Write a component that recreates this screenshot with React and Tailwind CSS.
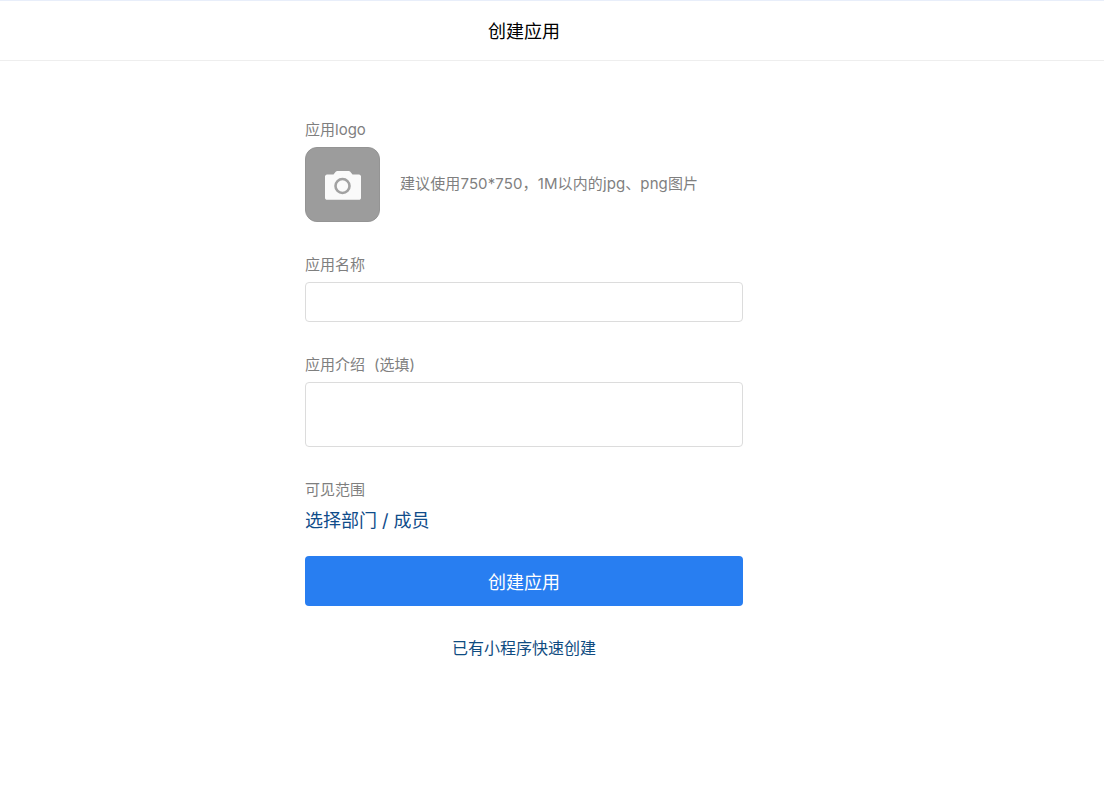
const fontStack = { fontFamily: 'Inter, "Noto Sans CJK SC", sans-serif' };

function CameraIcon() {
  return (
    <svg width="36" height="30" viewBox="0 0 36 30">
      <path
        d="M2 4.5h6.5l2.2-2.7c.4-.5 1-.8 1.7-.8h11.2c.7 0 1.3.3 1.700.8l2.2 2.7H34c1 0 2 1 2 2V28c0 1-1 1.800-2 1.800H2c-1 0-2-.8-2-1.800V6.500c0-1 1-2 2-2z"
        fill="#fafafa"
      />
      <circle cx="17.5" cy="16" r="7" fill="none" stroke="#a2a2a2" strokeWidth="2.6" />
    </svg>
  );
}

export default function App() {
  return (
    <div className="min-h-screen bg-white" style={fontStack}>
      <header className="h-[61px] border-t border-t-[#e8eefa] border-b border-b-[#eeeeee]">
        <div className="w-[1048px] h-full flex items-center justify-center">
          <h1 className="pt-[2px] text-[18px] leading-[24px] text-black font-normal">创建应用</h1>
        </div>
      </header>

      <div className="w-[1048px]">
        <div className="w-[438px] mx-auto pt-[58px]">
          <div className="text-[15px] leading-[22px] text-[#7f7f7f]">应用logo</div>
          <div className="flex items-center mt-[6px]">
            <div className="w-[75px] h-[75px] rounded-[12px] bg-[#9c9c9c] border border-[#949494] flex items-center justify-center">
              <CameraIcon />
            </div>
            <span className="ml-5 mb-[2px] text-[15px] leading-[20px] tracking-[0.11px] text-[#7f7f7f]">
              建议使用750*750，1M以内的jpg、png图片
            </span>
          </div>

          <div className="text-[15px] leading-[22px] text-[#7f7f7f] mt-[32px]">应用名称</div>
          <input
            type="text"
            className="block w-full h-[40px] mt-[6px] rounded border border-[#dcdcdc] outline-none"
          />

          <div className="text-[15px] leading-[22px] text-[#7f7f7f] mt-[32px]">
            应用介绍<span className="ml-[9px]">(选填)</span>
          </div>
          <textarea className="block w-full h-[65px] mt-[6px] rounded border border-[#dcdcdc] outline-none resize-none" />

          <div className="text-[15px] leading-[22px] text-[#7f7f7f] mt-[32px]">可见范围</div>
          <a className="block text-[18px] leading-[26px] text-[#0f4c8a] mt-[7px] cursor-pointer">
            选择部门 / 成员
          </a>

          <button className="block w-full h-[50px] pt-[2px] mt-[22px] rounded bg-[#287ef1] text-white text-[18px]">
            创建应用
          </button>

          <div className="text-center text-base leading-[22px] text-[#0f4c81] mt-[31px]">
            已有小程序快速创建
          </div>
        </div>
      </div>
    </div>
  );
}
